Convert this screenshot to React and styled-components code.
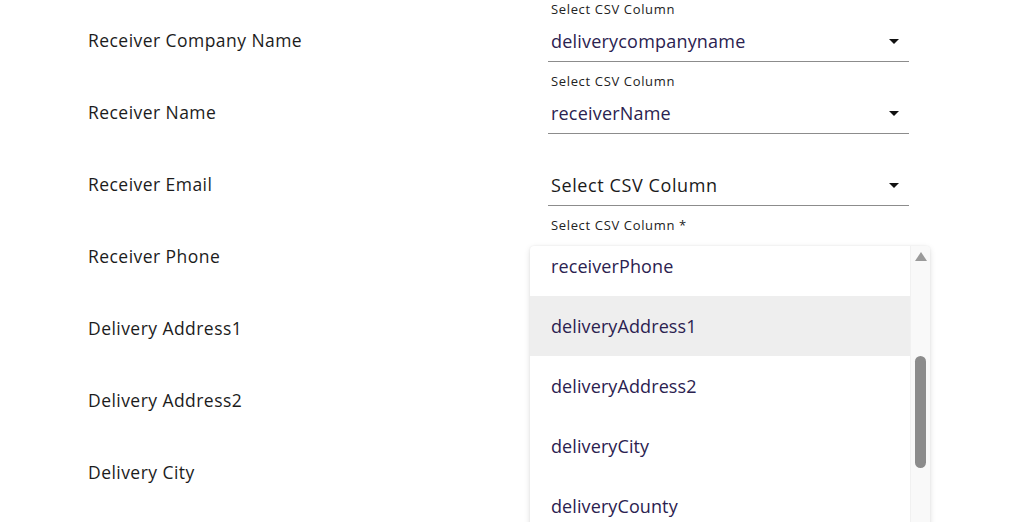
import React from "react";
import styled, { createGlobalStyle } from "styled-components";

const Global = createGlobalStyle`
  html, body { margin: 0; padding: 0; background: #fff; overflow: hidden; }
  body { font-family: "Open Sans", "Noto Sans", sans-serif; }
`;

const Page = styled.div`
  width: 1012px;
  height: 522px;
  padding-left: 88px;
  box-sizing: border-box;
  display: flex;
  flex-direction: column;
`;

const Row = styled.div`
  display: grid;
  grid-template-columns: 460px 361px;
  height: 72px;
  flex: none;
`;

const Label = styled.div`
  font-size: 17.5px;
  color: #1c1c1c;
  padding-top: 28px;
  line-height: 24px;
  letter-spacing: 0.45px;
`;

const Field = styled.div`
  position: relative;
  display: flex;
  flex-direction: column;
  height: 62px;
  border-bottom: ${(p) => (p.$open ? "none" : "1px solid #8c8c8c")};
  box-sizing: border-box;
`;

const SmallLabel = styled.div`
  font-size: 13px;
  line-height: 18px;
  color: #222;
  padding-left: 3px;
  letter-spacing: 0.65px;
  visibility: ${(p) => (p.$hidden ? "hidden" : "visible")};
`;

const ValueRow = styled.div`
  display: flex;
  align-items: center;
  justify-content: space-between;
  height: 32px;
  margin-top: 7px;
  padding: 0 10px 0 3px;
`;

const Value = styled.span`
  font-size: 18px;
  color: ${(p) => (p.$placeholder ? "#1a1a1a" : "#2b2250")};
  letter-spacing: ${(p) => (p.$placeholder ? "0.6px" : "0.2px")};
`;

const Caret = styled.span`
  width: 0;
  height: 0;
  border-left: 5px solid transparent;
  border-right: 5px solid transparent;
  border-top: 5px solid #111;
`;

const Menu = styled.div`
  position: absolute;
  left: -18px;
  top: 30px;
  width: 400px;
  height: 300px;
  background: #fff;
  border-radius: 4px;
  box-shadow: 0 2px 6px rgba(0, 0, 0, 0.12), 0 0 2px rgba(0, 0, 0, 0.08);
  display: flex;
  overflow: hidden;
  z-index: 5;
`;

const List = styled.ul`
  list-style: none;
  margin: -10px 0 0;
  padding: 0;
  flex: 1;
`;

const Item = styled.li`
  height: 60px;
  display: flex;
  align-items: center;
  padding-left: 21px;
  font-size: 18px;
  color: #2b2250;
  letter-spacing: 0.1px;
  background: ${(p) => (p.$active ? "#eeeeee" : "transparent")};
`;

const Track = styled.div`
  width: 19px;
  background: #f9f9f9;
  border-left: 1px solid #f1f1f1;
  display: flex;
  flex-direction: column;
  align-items: center;
`;

const UpArrow = styled.span`
  margin-top: 6px;
  width: 0;
  height: 0;
  border-left: 6px solid transparent;
  border-right: 6px solid transparent;
  border-bottom: 9px solid #9a9a9a;
`;

const Thumb = styled.div`
  margin-top: 95px;
  width: 11px;
  height: 112px;
  border-radius: 6px;
  background: #8c8c8c;
`;

const rows = [
  { label: "Receiver Company Name", value: "deliverycompanyname" },
  { label: "Receiver Name", value: "receiverName" },
  { label: "Receiver Email", value: null },
  { label: "Receiver Phone", open: true },
  { label: "Delivery Address1", hidden: true },
  { label: "Delivery Address2", hidden: true },
  { label: "Delivery City", hidden: true },
];

const options = [
  "receiverPhone",
  "deliveryAddress1",
  "deliveryAddress2",
  "deliveryCity",
  "deliveryCounty",
];

export default function App() {
  return (
    <>
      <Global />
      <Page>
        {rows.map((r) => (
          <Row key={r.label}>
            <Label>{r.label}</Label>
            {r.hidden ? (
              <div />
            ) : r.open ? (
              <Field $open>
                <SmallLabel>Select CSV Column *</SmallLabel>
                <Menu>
                  <List>
                    {options.map((o) => (
                      <Item key={o} $active={o === "deliveryAddress1"}>
                        {o}
                      </Item>
                    ))}
                  </List>
                  <Track>
                    <UpArrow />
                    <Thumb />
                  </Track>
                </Menu>
              </Field>
            ) : (
              <Field>
                <SmallLabel $hidden={!r.value}>Select CSV Column</SmallLabel>
                <ValueRow>
                  <Value $placeholder={!r.value}>
                    {r.value || "Select CSV Column"}
                  </Value>
                  <Caret />
                </ValueRow>
              </Field>
            )}
          </Row>
        ))}
      </Page>
    </>
  );
}
